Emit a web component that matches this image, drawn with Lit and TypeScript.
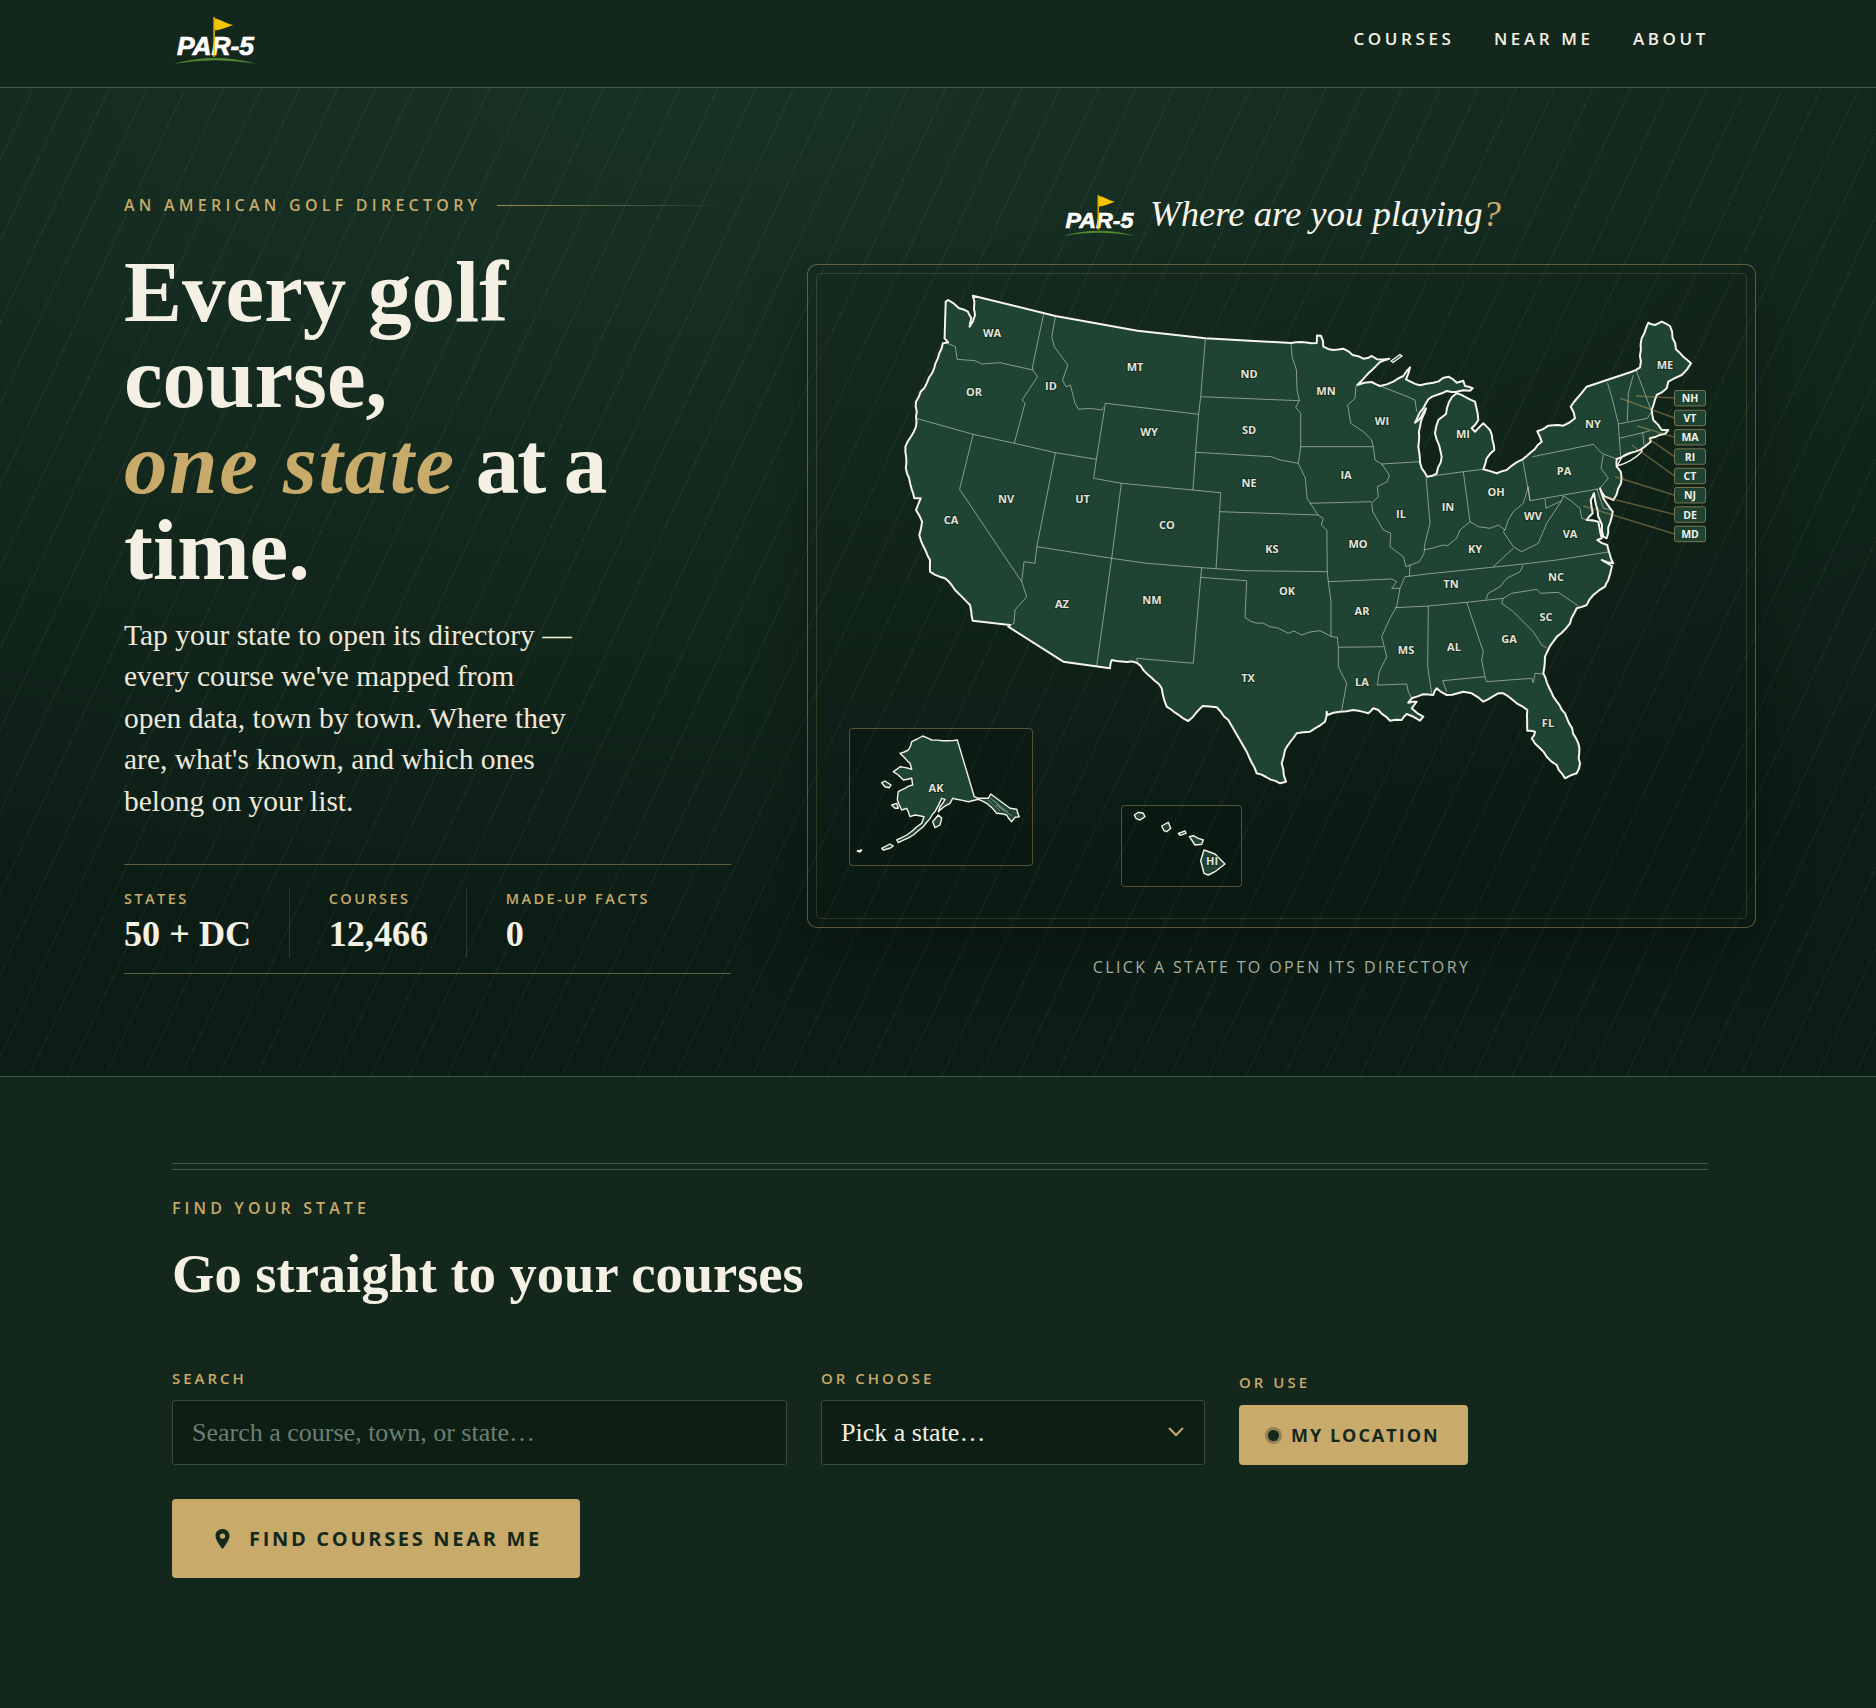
import { LitElement, html, css, svg } from "lit";
import { customElement } from "lit/decorators.js";

const OUTLINE_RAW = `972.9,295.7 1055.4,316 1137.5,330.7 1205.4,338.3 1291,343 1316.7,343 1317,335.5 1321,335.8 1323.3,346.7 1333.3,350 1343.3,348.7 1352.7,355 1363.3,358.7 1371.7,356 1377.3,359.3 1389.3,358.7 1380,362 1368.3,373.3 1357.3,385 1371.7,382 1380,386 1393.3,381.7 1403.3,376 1410,367.3 1406,379.3 1420,385.3 1433.3,382.7 1448.3,376.7 1456.7,382.7 1463.3,380.7 1465,386 1472.7,388.3 1470,390.7 1456.7,391.7 1446.7,391 1436.7,395 1428.3,399.3 1423.3,408.3 1419,414 1415,422.7 1421,417 1426,408.3 1423,416 1420,426.7 1418.3,446.7 1421.7,468.3 1427.3,476.7 1436.7,473.3 1441.7,456.7 1435,433.3 1438.3,420 1446,414 1447,408 1449,402 1452.3,396.7 1456.7,393.3 1475,401.7 1478.3,420 1471.7,428.3 1475,431.7 1483.3,423.3 1490,430 1494.3,450 1486.7,458.3 1483.3,469.3 1496.7,473.3 1506.7,470 1522.7,459.3 1541.7,441.7 1537.3,431.3 1548.3,425.7 1563.3,425.7 1575,418.3 1570.7,406.7 1586.7,386.7 1631.7,371.7 1640,367.3 1641.7,338.3 1648.3,322.7 1655,325 1661.7,321.7 1670,326 1676,349.3 1683.3,356.7 1691,363.3 1681.7,375 1668.3,381.7 1666.7,388.3 1656.7,395 1651.7,410 1653.3,420 1661.7,430 1668.3,430 1665,434 1656,436.7 1650,438.3 1650.7,441.7 1640,450 1630,453 1621.7,457.3 1616.7,459 1616.7,466.7 1620.7,471.7 1621,483.3 1613.3,500 1605,496.7 1600,488.3 1603.3,498.3 1612.7,511.7 1606.7,538.3 1603.3,536.7 1602,525 1598,516 1595,500 1594,493.3 1590.7,500 1592.7,513.3 1586.7,520 1598.3,521.7 1601.7,538.3 1597.3,540 1607.3,545 1610,555 1613.3,563.3 1601.7,560 1612,566 1608.3,580 1605,586.7 1593.3,595 1586.7,605 1576.7,608.3 1570,623.3 1553.3,641.7 1545,656.7 1543.3,673.3 1553.3,696.7 1565,713.3 1578.3,743.3 1580,763.3 1576.7,773.3 1565,778.3 1556.7,765 1546.7,756.7 1540,748.3 1531.7,738.3 1535,731.7 1527.3,730.7 1527.3,710 1516.7,703.3 1503.3,693.3 1498.3,693.3 1483.3,701.7 1471.7,693.3 1463.3,691.7 1446.7,695 1436.7,688.3 1433.3,695 1423.3,694.3 1411.7,698.3 1408.3,702.7 1416.7,701.7 1411.7,708.3 1423.3,716.7 1420,720.7 1406.7,714 1401.7,720 1390,720.7 1378.3,710 1373.3,708.3 1368.3,713.3 1353.3,710 1340,711.7 1327.3,715 1326.7,711.7 1325,721.7 1310,731.7 1296.7,733.3 1285,750 1281.7,763.3 1286,781.7 1280,783.3 1256.7,773.3 1246.7,751.7 1228.3,720 1216.7,707.3 1202.7,706 1188.3,721 1166.7,706.7 1161.7,688.3 1136.7,662.7 1111.7,660 1110,668.3 1063.3,661.7 1008.3,626.7 1010,625 972.7,620.7 970,605 958.3,593.3 945,578.3 930,571.7 930,560 919.3,535 922.1,521.7 916,510 920.7,498.3 914.3,498.3 907,473.3 905.4,446.7 916,426.7 916,401.7 932,373.3 942.9,343.3 948.2,342.3 944.6,338.3 945.7,301.7 948.2,300 959,308.3 967.9,311.7 971.4,318.3 969.6,326.7 975,315`;

/** Breaks up the shorter coast segments so the shoreline reads as natural rather than ruled. */
function rough(raw: string, amp: number, maxLen = 36): string {
  const p = raw.split(" ").map((s) => s.split(",").map(Number));
  const out: string[] = [];
  p.forEach((a, i) => {
    const b = p[(i + 1) % p.length];
    out.push(`${a[0]},${a[1]}`);
    const dx = b[0] - a[0];
    const dy = b[1] - a[1];
    const len = Math.hypot(dx, dy);
    if (len < 7 || len > maxLen) return;
    const nx = -dy / len;
    const ny = dx / len;
    const n = Math.max(2, Math.floor(len / 5));
    for (let k = 1; k < n; k++) {
      const t = k / n;
      const h = Math.sin((a[0] + k * 3.1) * 12.9898 + (a[1] + k) * 78.233) * 43758.5453;
      const o = (h - Math.floor(h) - 0.5) * 2 * amp;
      out.push(`${(a[0] + dx * t + nx * o).toFixed(1)},${(a[1] + dy * t + ny * o).toFixed(1)}`);
    }
  });
  return out.join(" ");
}

const OUTLINE = rough(OUTLINE_RAW, 0.9);

const BORDERS = [
  "1043.6,314.3 1032.5,366.7 1032.9,370",
  "945.7,342.7 955.4,346.7 957.1,359.3 975,360.7 982.1,364 1000,362.7 1032.9,370 1037.5,376.7 1022.1,400 1025,403.3 1014.3,443.3",
  "916,418.3 973.2,434.3 1014.3,443.3 1055.4,452.7 1096.4,459.3",
  "973.2,434.3 959.6,489.3 1021.7,581.7 1026.7,596.7 1015,610 1014,623.3 1009,626",
  "1055.4,452.7 1036.8,546.7 1035,563.3 1024,561.7 1021.7,581.7",
  "1055.4,316.7 1051.8,336.7 1054.3,346.7 1067.9,365 1062.5,380 1066,386.7 1070.4,385 1075,403.3 1078.6,409.3 1089.3,408.3 1101.8,410 1103.6,407.3",
  "1105.4,403.3 1096.4,459.3 1093.6,478.3 1121.4,483.3 1192.9,490 1220.7,492.7 1219.6,511.7 1216,569",
  "1105.4,403.3 1198.6,414.3",
  "1205.4,338.3 1200.7,396.7 1198.6,414.3 1195.7,451.7 1192.9,490",
  "1200.7,396.7 1299.3,400.7",
  "1291,343 1292.1,356.7 1296.4,370 1297.1,390 1299.3,400.7 1295.7,407.3 1300.7,413.3 1300.7,447.3 1298.2,463.3",
  "1195.7,452.3 1271.4,456.7 1280.4,460 1298.2,463.3 1305.4,478.3 1307.1,498.3 1317.9,515 1323.2,518.3 1321.4,525 1326.8,530 1327.3,571.7 1328.3,581.7 1331,601.7 1331,636.7",
  "1219.6,511.7 1317.9,515",
  "1121.4,483.3 1111.7,558.3 1096.7,665.7",
  "1036.8,546.7 1111.7,558.3 1146.7,563.3 1201.7,567.7 1245,570.7 1327.3,571.7",
  "1201.7,567.7 1200.7,577.3 1193.3,663.3 1136.7,658.3 1137.5,662.7",
  "1200.7,577.3 1246.7,580.7 1245,617.3 1250,621 1256.7,623.3 1263,623 1270,626.7 1278,628 1288.3,633.3 1294,631 1301.7,635 1310,632 1320,630.7 1331.7,636.7 1337.3,637.3 1338.3,647.3 1338.3,666.7 1346.7,683.3 1341.7,710",
  "1338.3,647.3 1383.3,646.7",
  "1328.3,581.7 1391.7,579 1396.7,581.7 1391.7,588.3 1400,588.3",
  "1300,446.7 1373.3,446.7",
  "1310,503.3 1371.7,501.7",
  "1356,386 1355,398.3 1347.7,405 1350.7,423.3 1363.3,431.7 1371.7,440 1373.3,446.7 1375,460 1381.7,464 1389.3,475 1387.3,481.7 1377.3,486.7 1378.3,496.7 1371.7,503.3 1372.7,511.7 1383.3,530 1390.7,533.3 1390,546.7 1403.3,556.7 1406,566.7 1410,565 1409.3,576.7",
  "1405,576.7 1400,588.3 1396.7,606.7 1390,618.3 1381.7,636.7 1386.7,656.7 1379.3,671.7 1377.3,685 1406.7,684 1408.3,691.7 1411.7,698",
  "1395,607.7 1428.3,606 1466.7,602.3 1503.3,598.3",
  "1405,576.7 1426.7,574 1491.7,567.3 1523.3,564 1556.7,560 1608.3,552",
  "1523.3,565 1520,571.7 1506.7,578.3 1500,586.7 1488.3,593.3 1486,599.3",
  "1503.3,598.3 1511.7,593.3 1536.7,589.3 1540.7,593.3 1558.3,592.3 1578.3,606",
  "1503.3,598.3 1501.7,603.3 1513.3,611.7 1533.3,631.7 1541.7,645 1546.7,647.7",
  "1428.3,606 1427.7,666.7 1431.7,693.3",
  "1466.7,602.3 1483.3,651.7 1481.7,660 1485,676.7 1486.7,681.7 1531.7,678.3 1533.3,682.7 1535,673.3 1544,674",
  "1446.7,691.7 1442.7,680.7 1485,676.7",
  "1381.7,464 1420,461.7",
  "1381.7,386.7 1403.3,395 1415,400 1416.7,411.7",
  "1426,476.7 1430,523.3 1425,543.3 1424,553.3 1419.3,561.7 1410,565",
  "1427.3,476.7 1463.3,471.7 1483.3,469.3",
  "1463.3,471.7 1470,521.7",
  "1424,550 1431.7,548.3 1443.3,545 1447,546 1456.7,538.3 1460,530 1470,521.7 1478.3,526.7 1490,528.3 1498.3,525 1505,530 1508.3,520 1513.3,511.7 1523.3,503.3 1528.3,486.7 1530,500.7",
  "1522.7,459.3 1530,500.7 1598.3,489",
  "1532.7,456.7 1593.3,444.3 1601.7,453.3 1616.7,459",
  "1603.3,455 1601,468.3 1608.3,478.3 1600,488.3",
  "1545,499 1546,508.3 1561.7,500.7 1563.3,496 1570,500 1580,508.3 1581.7,518.3 1593.3,521.7",
  "1561.7,500.7 1546.7,523.3 1538.3,543.3 1521.7,551.7 1513.3,546.7 1503.3,531.7 1505,530",
  "1513.3,548.3 1493.3,566.7",
  "1596.7,488.3 1603.3,508.3 1611.7,510",
  "1607.3,382.7 1611.7,396.7 1618.3,423.3 1619.3,438.3 1620.7,456.7",
  "1633.3,375 1628.3,393.3 1627.3,421",
  "1636,370 1651.7,411.7",
  "1618.3,424 1647.3,418.3 1651.7,411.7",
  "1619.3,438.3 1642.7,432.7 1650,430.7",
  "1642.7,432.7 1644,445",
];

const LABELS: [string, number, number][] = [
  ["WA", 992, 332], ["OR", 974, 391], ["ID", 1051, 385], ["MT", 1135, 366], ["ND", 1249, 373],
  ["SD", 1249, 429], ["WY", 1149, 431], ["NE", 1249, 482], ["NV", 1006, 498], ["UT", 1082.5, 498],
  ["CO", 1167, 524], ["CA", 951, 519], ["KS", 1272, 548], ["MN", 1326, 390], ["IA", 1346, 474],
  ["MO", 1358, 543], ["AR", 1362, 610], ["WI", 1382, 420], ["IL", 1401, 513], ["IN", 1448, 506],
  ["MI", 1463, 433], ["OH", 1496, 491], ["KY", 1475, 548], ["TN", 1451, 583], ["WV", 1533, 515],
  ["VA", 1570, 533], ["NC", 1556, 576], ["SC", 1546, 616], ["PA", 1564, 470], ["NY", 1593, 423],
  ["ME", 1665, 364], ["AZ", 1062, 603], ["NM", 1152, 599], ["OK", 1287, 590], ["TX", 1248, 677],
  ["LA", 1362, 681], ["MS", 1406, 649], ["AL", 1454, 646], ["GA", 1509, 638], ["FL", 1548, 722],
  ["AK", 936, 787], ["HI", 1212, 860],
];

const CHIPS: [string, number, number, number][] = [
  ["NH", 390, 1636, 396], ["VT", 409.7, 1620, 398.3], ["MA", 429, 1637.3, 426], ["RI", 448.3, 1648.3, 438.3],
  ["CT", 467.7, 1631.7, 445], ["NJ", 487, 1615, 476.7], ["DE", 506.3, 1605, 497.3], ["MD", 525.7, 1583.3, 506],
];

const ISLES = [
  "1391,361 1400,354.5 1402,356 1393,362.5",
  rough("922.7,736 931.7,740 948.3,740.7 957.3,740 974.3,796.7 978.3,798.3 988.3,798.3 990.7,794 1010,808.3 1016.7,809.3 1019.3,816.7 1015,817.3 1011.7,821.7 1006.7,815 996.7,813.3 986.7,803.3 978.3,799.3 968.3,801.7 956.7,799.3 952.7,798.3 950,803.3 944,806.7 938.3,811.7 940,806.7 945,799.3 941.7,798.3 935,811.7 932.7,814 923.3,826.7 913.3,835 898.3,842.7 896.7,840 906.7,835 921.7,823.3 924,816.7 915,815 910,816.7 906.7,808.3 901.7,810 897.3,800 898.3,791.7 905,788.3 912.7,785 911.7,778.3 903.3,780 898.3,775 893.3,771.7 900,766.7 908.3,768.3 911.7,769.3 910,763.3 905,758.3 900,753.3 908.3,750 911.7,741.7", 0.6, 24),
  "881.7,782.7 885,781 891,785 889.3,787.7 885,786.7",
  "891.7,805 896.7,803.3 898.3,808.3 895,808.3",
  "932.7,821.7 938.3,815 941.7,818.3 940,825 935,827.7",
  "881.7,848.3 890,844 893.3,846 890,848.3 883.3,850",
  "857.3,851 861.7,850 860,852",
  "1134.3,815 1138.3,812.3 1143.3,813.3 1145,816.7 1140,820 1136,818.3",
  "1161.7,826 1168.3,822.3 1170.7,828.3 1166.7,831.7 1164,830.7",
  "1178.3,833.3 1185,831 1186,833.3 1180,835.3",
  "1189.3,836.7 1193.3,835.7 1198.3,838.3 1203.3,840 1201.7,844.3 1195,845 1191.7,840",
  "1204,850 1215,854 1225,864 1215,871.7 1208.3,875 1204,873.3 1200.7,860.7",
];

const PANHANDLE = ["990,798 1008,812", "993,800 1004,811", "996,805 1012,816", "988,800 1000,811"];

function logo(cls: string) {
  return html`<svg class=${cls} viewBox="0 0 84 50" role="img" aria-label="PAR-5">
    <text class="logo-word" x="4" y="40" textLength="77" lengthAdjust="spacingAndGlyphs">PAR-5</text>
    <rect x="40.4" y="2" width="1.4" height="40" fill="#f5c400"></rect>
    <path d="M41.5 3.5 C47 4 52 8 60 10 C54 12 48 15 41.5 15.500 Z" fill="#f5c400"></path>
    <path d="M1 48.800 Q42 37 83 48.800 Q42 41.500 1 48.800 Z" fill="#4f8a2f"></path>
  </svg>`;
}

@customElement("app-root")
export class AppRoot extends LitElement {
  static styles = css`
    :host { display: block; min-height: 1708px; background: #14271d; color: #f4f0e4; font-family: "Open Sans", "Noto Sans", sans-serif; }
    * { box-sizing: border-box; }
    .top { height: 88px; display: flex; align-items: flex-start; justify-content: space-between; padding: 0 167px 0 173px; background: #14271d; border-bottom: 1px solid #3f5a4a; }
    .logo-top { width: 84px; height: 50px; margin-top: 15px; display: block; }
    .logo-word { font: italic 700 25px "Liberation Sans", sans-serif; fill: #fff; stroke: #fff; stroke-width: .7px; }
    .nav { display: flex; gap: 39.4px; margin-top: 28px; }
    .nav a { color: #f4f0e4; font-size: 17px; font-weight: 600; letter-spacing: 3.6px; line-height: 22px; }

    .hero { height: 989px; display: grid; grid-template-columns: 607px 949px; column-gap: 76px; padding: 0 120px 0 124px; border-bottom: 1px solid #3f5a4a;
      background:
        repeating-linear-gradient(115deg, transparent 0 29.7px, rgba(255,255,255,.055) 29.7px 30.7px, transparent 30.7px 34.47px),
        radial-gradient(110% 85% at 38% 0%, #193226 0%, #14291e 50%, #0c1d15 100%); }
    .left { padding-top: 106px; }
    .eyebrow-row { display: flex; align-items: center; gap: 16px; }
    .eyebrow { font-size: 16px; font-weight: 600; letter-spacing: 4.25px; color: #c8aa6a; line-height: 22px; white-space: nowrap; }
    .eyebrow-line { width: 230px; height: 1px; background: linear-gradient(90deg, rgba(200,170,106,.75), transparent); }
    h1 { margin: 33px 0 0; font: 700 87px/86px "Liberation Serif", serif; color: #f4f0e4; }
    h1 em { color: #c8aa6a; font-style: italic; letter-spacing: 1.7px; }
    h1 .tail { letter-spacing: -2px; }
    .lede { margin: 22px 0 0; width: 510px; font: 29.5px/41.4px "Liberation Serif", serif; color: #ece8da; }
    .stats { display: flex; margin-top: 41.5px; border-top: 1px solid rgba(200,170,106,.45); border-bottom: 1px solid rgba(200,170,106,.45); padding: 24px 0 15px; }
    .stat { padding: 0 37.5px 0 39px; border-left: 1px solid rgba(255,255,255,.12); }
    .stat:first-child { padding-left: 0; border-left: 0; }
    .stat-label { font-size: 14.5px; font-weight: 600; letter-spacing: 2.45px; color: #c8aa6a; line-height: 20px; white-space: nowrap; }
    .stat-val { margin-top: 1px; font: 700 36.2px/48px "Liberation Serif", serif; color: #f4f0e4; white-space: nowrap; }

    .right { padding-top: 105px; display: flex; flex-direction: column; align-items: center; }
    .map-title { display: flex; align-items: center; gap: 14px; height: 44px; }
    .logo-title { width: 74px; height: 44px; display: block; }
    .map-q { font: italic 36.7px/40px "Liberation Serif", serif; color: #f7f4ea; white-space: nowrap; margin-top: -3px; }
    .map-q span { color: #c8aa6a; }
    .frame { margin-top: 27px; width: 949px; height: 664px; border: 1px solid rgba(200,170,106,.42); border-radius: 10px; padding: 8px; background: rgba(0,0,0,.08); box-shadow: 0 24px 60px rgba(0,0,0,.28); }
    .frame-in { width: 100%; height: 100%; border: 1px solid rgba(200,170,106,.2); border-radius: 5px; position: relative; }
    .map { position: absolute; left: -10px; top: -10px; width: 949px; height: 664px; overflow: visible; }
    .land { fill: #1f4433; }
    .coast { fill: none; stroke: #f6f4ec; stroke-width: 2; stroke-linejoin: round; }
    .b { fill: none; stroke: rgba(226,228,210,.55); stroke-width: 1; stroke-linejoin: round; }
    .isle { fill: #1f4433; stroke: #f4f2ea; stroke-width: 1.4; stroke-linejoin: round; }
    .inset { fill: rgba(0,0,0,.1); stroke: rgba(200,170,106,.38); stroke-width: 1; }
    .sound { fill: #11241a; stroke: #f4f2ea; stroke-width: 1.4; }
    .lead { stroke: rgba(200,170,106,.42); stroke-width: 1.5; fill: none; }
    .chip { fill: #1f4333; stroke: rgba(200,170,106,.55); stroke-width: 1; }
    .lbl { font: 700 11px "Open Sans", sans-serif; fill: #e4e3d8; text-anchor: middle; dominant-baseline: central; paint-order: stroke; stroke: rgba(8,24,16,.45); stroke-width: 2px; }
    .lbl-chip { font: 700 10.5px "Open Sans", sans-serif; fill: #f2f3e8; text-anchor: middle; dominant-baseline: central; }
    .pan { stroke: rgba(244,242,234,.55); stroke-width: .7; fill: none; }
    .caption { margin-top: 28px; font-size: 16px; letter-spacing: 2.37px; color: #a5ad9f; line-height: 22px; white-space: nowrap; }

    .find { padding: 86px 168px 0 172px; }
    .rule { height: 7px; border-top: 1px solid #46594b; border-bottom: 1px solid #46594b; }
    .f-eyebrow { margin-top: 27px; font-size: 16px; font-weight: 600; letter-spacing: 4.1px; color: #c8aa6a; line-height: 22px; }
    h2 { margin: 23px 0 0; font: 700 54.5px/64px "Liberation Serif", serif; color: #f4f0e4; }
    .form { display: grid; grid-template-columns: 615px 384px 229px; column-gap: 34px; align-items: end; margin-top: 62px; }
    .field-label { display: block; font-size: 15px; font-weight: 600; letter-spacing: 3px; color: #c8aa6a; line-height: 20px; margin-bottom: 12px; }
    .input, .select { width: 100%; height: 65px; background: #0d1e14; border: 1px solid #3a4a3e; border-radius: 3px; padding: 0 19px; color: #f4f0e4; font: 26px "Liberation Serif", serif; outline: none; appearance: none; display: block; }
    .input::placeholder { color: #6c7f72; opacity: 1; }
    .sel-wrap { position: relative; }
    .chev { position: absolute; right: 20px; top: 26px; width: 18px; height: 11px; pointer-events: none; }
    .use .field-label { margin-bottom: 13px; }
    .btn { display: flex; align-items: center; background: #c8aa6a; color: #14291e; border: 0; border-radius: 4px; font-family: "Open Sans", sans-serif; font-weight: 700; white-space: nowrap; }
    .btn-loc { height: 60px; width: 229px; padding: 0 0 0 29px; gap: 12px; font-size: 18px; letter-spacing: 2px; }
    .dot { width: 11px; height: 11px; border-radius: 50%; background: #14291e; box-shadow: 0 0 0 3px rgba(20,41,30,.3); flex: none; }
    .btn-find { margin-top: 34px; height: 79px; width: 408px; padding: 0 0 0 43px; gap: 19px; font-size: 20px; letter-spacing: 2.7px; }
    .pin { width: 15px; height: 20px; flex: none; }
  `;

  render() {
    return html`
      <header class="top">
        ${logo("logo-top")}
        <nav class="nav"><a>COURSES</a><a>NEAR ME</a><a>ABOUT</a></nav>
      </header>
      <section class="hero">
        <div class="left">
          <div class="eyebrow-row"><span class="eyebrow">AN AMERICAN GOLF DIRECTORY</span><span class="eyebrow-line"></span></div>
          <h1>Every golf<br />course,<br /><em>one state</em><span class="tail"> at a</span><br />time.</h1>
          <p class="lede">Tap your state to open its directory —<br />every course we've mapped from<br />open data, town by town. Where they<br />are, what's known, and which ones<br />belong on your list.</p>
          <div class="stats">
            <div class="stat"><div class="stat-label">STATES</div><div class="stat-val">50 + DC</div></div>
            <div class="stat"><div class="stat-label">COURSES</div><div class="stat-val">12,466</div></div>
            <div class="stat"><div class="stat-label">MADE-UP FACTS</div><div class="stat-val">0</div></div>
          </div>
        </div>
        <div class="right">
          <div class="map-title">${logo("logo-title")}<span class="map-q">Where are you playing<span>?</span></span></div>
          <div class="frame"><div class="frame-in">${this.map()}</div></div>
          <div class="caption">CLICK A STATE TO OPEN ITS DIRECTORY</div>
        </div>
      </section>
      <section class="find">
        <div class="rule"></div>
        <div class="f-eyebrow">FIND YOUR STATE</div>
        <h2>Go straight to your courses</h2>
        <div class="form">
          <label><span class="field-label">SEARCH</span><input class="input" placeholder="Search a course, town, or state…" /></label>
          <label><span class="field-label">OR CHOOSE</span>
            <div class="sel-wrap">
              <select class="select"><option>Pick a state…</option><option>Alabama</option><option>Alaska</option></select>
              <svg class="chev" viewBox="0 0 18 11"><path d="M2 2 L9 9 L16 2" fill="none" stroke="#c8aa6a" stroke-width="2"></path></svg>
            </div>
          </label>
          <div class="use"><span class="field-label">OR USE</span><button class="btn btn-loc"><span class="dot"></span>MY LOCATION</button></div>
        </div>
        <button class="btn btn-find">
          <svg class="pin" viewBox="0 0 15 20"><path fill-rule="evenodd" fill="#14291e" d="M7.500 0C3.400 0 .5 3.100.5 7c0 4.800 7 13 7 13s7-8.200 7-13C14.500 3.100 11.600 0 7.500 0Zm0 4.400a2.700 2.700 0 1 1 0 5.400 2.700 2.700 0 0 1 0-5.400Z"></path></svg>
          FIND COURSES NEAR ME
        </button>
      </section>
    `;
  }

  map() {
    return html`<svg class="map" viewBox="807 264 949 664" role="img" aria-label="Map of the United States">
      ${svg`
        <rect class="inset" x="849.5" y="728.500" width="183" height="137" rx="3"></rect>
        <rect class="inset" x="1121.500" y="805.500" width="120" height="81" rx="3"></rect>
        <polygon class="land" points=${OUTLINE}></polygon>
        ${BORDERS.map((b) => svg`<polyline class="b" points=${b}></polyline>`)}
        <polygon class="coast" points=${OUTLINE}></polygon>
        <path class="sound" d="M1621.700 457.300 Q1632 452 1641.700 449.700 L1642 451.500 Q1632 462 1617 466 Z"></path>
        ${ISLES.map((p) => svg`<polygon class="isle" points=${p}></polygon>`)}
        ${PANHANDLE.map((p) => svg`<polyline class="pan" points=${p}></polyline>`)}
        ${CHIPS.map(([, y, x2, y2]) => svg`<line class="lead" x1=${x2} y1=${y2} x2="1674" y2=${y + 8}></line>`)}
        ${LABELS.map(([t, x, y]) => svg`<text class="lbl" x=${x} y=${y}>${t}</text>`)}
        ${CHIPS.map(([t, y]) => svg`<rect class="chip" x="1674.500" y=${y + 0.5} width="31" height="15.500" rx="2"></rect><text class="lbl-chip" x="1690" y=${y + 8.2}>${t}</text>`)}
      `}
    </svg>`;
  }
}
